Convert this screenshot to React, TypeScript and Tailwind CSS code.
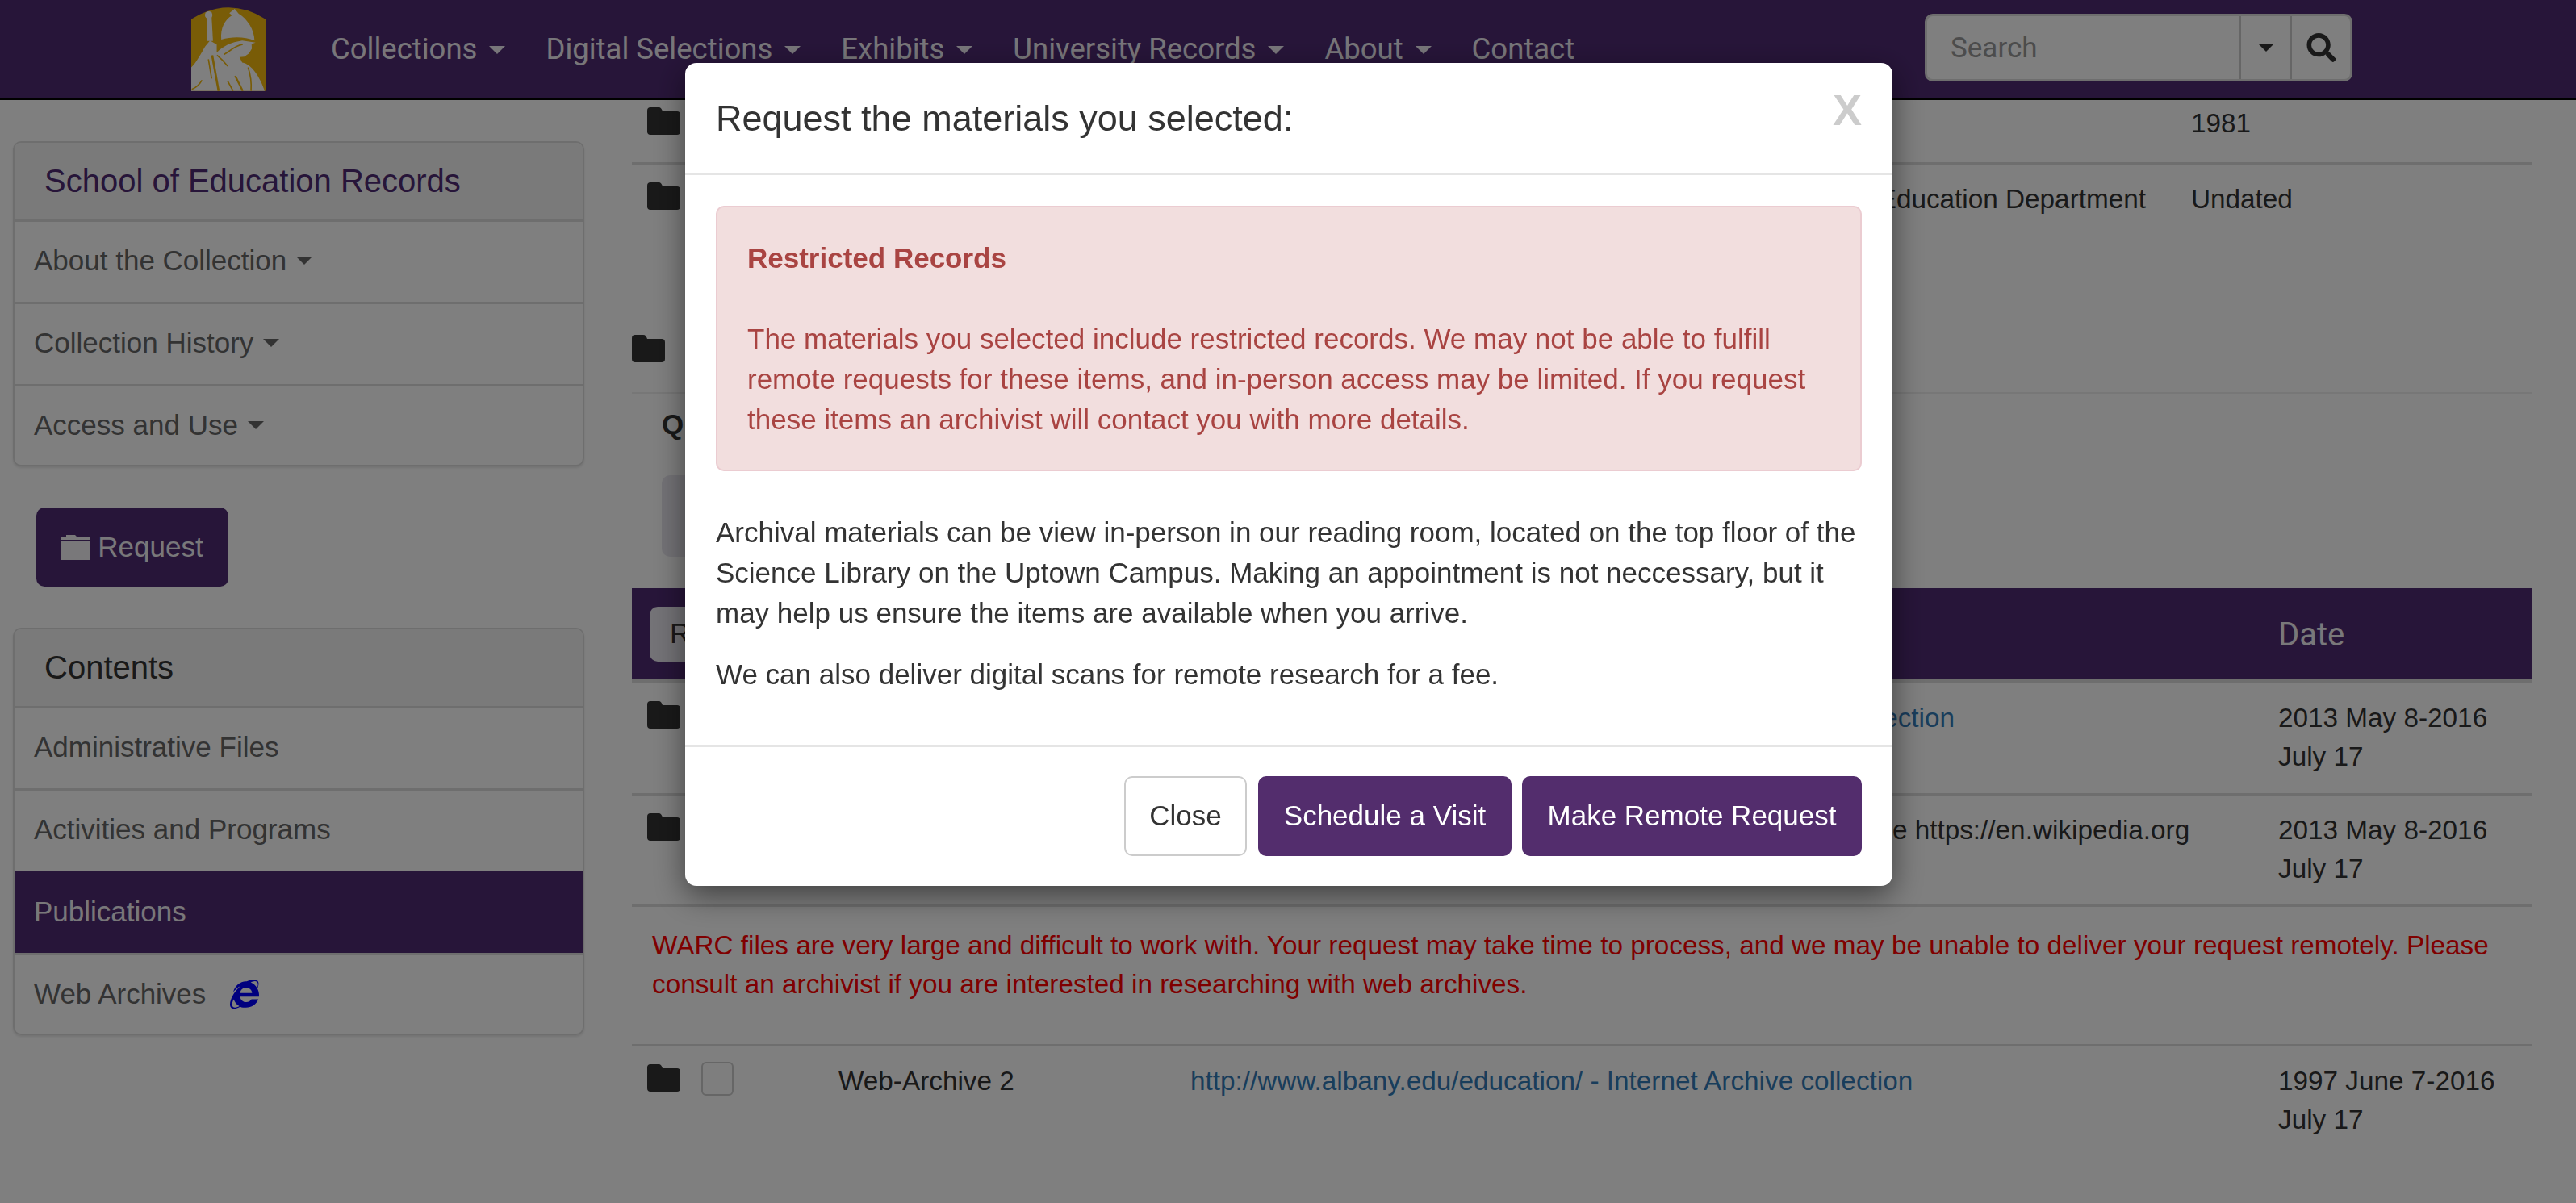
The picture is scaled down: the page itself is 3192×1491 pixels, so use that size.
import React from 'react';
import { FaInternetExplorer, FaSearch } from 'react-icons/fa';

const navItems = ['Collections', 'Digital Selections', 'Exhibits', 'University Records', 'About'];

const Caret = () => (
  <span className="inline-block w-0 h-0 border-t-[10px] border-x-[10px] border-x-transparent border-t-current" />
);

const Folder = () => (
  <svg viewBox="0 0 41 34" className="w-[41px] h-[34px] shrink-0" fill="#333333">
    <path d="M4 0h10c3 0 4 2 5 5h18c2.500 0 4 1.500 4 4v21c0 2.500-1.500 4-4 4H4c-2.500 0-4-1.500-4-4V4c0-2.500 1.500-4 4-4z" />
  </svg>
);

// логотип университета, фигура рисуется по координатам кропа
const Logo = () => (
  <svg viewBox="110 27 277 311" className="w-[92px] h-[104px] shrink-0">
    <path d="M110 338V70Q250-16 387 70V338Z" fill="#f2b90f" />
    <g fill="#ffffff">
      <circle cx="175" cy="55" r="14" />
      <path d="M168 62h18l5 90h-22z" />
      <path d="M222 146C218 105 235 72 262 56L252 48 272 32 287 50C320 70 345 110 346 150 310 135 262 135 222 146Z" />
      <path d="M205 195C225 172 260 156 300 150L350 158 335 163 336 180 325 198 308 210 290 212 300 232C335 238 366 285 384 338H110V250C130 232 148 195 162 172L180 150 205 165Z" />
    </g>
    <g fill="none" stroke="#f2b90f" strokeWidth="5">
      <path d="M232 202C255 190 270 170 302 164" />
      <path d="M206 205C222 218 232 228 246 246" />
      <path d="M188 205L212 338" strokeWidth="8" />
      <path d="M174 220L186 292" />
      <path d="M112 332C130 325 142 312 150 298" />
      <path d="M245 300L266 338" />
      <path d="M274 282C285 305 294 322 302 338" strokeWidth="7" />
      <path d="M322 250C332 280 335 310 333 338" />
    </g>
  </svg>
);

const Panel = ({ title, titleClass, children }: { title: string; titleClass: string; children: React.ReactNode }) => (
  <div className="border-2 border-[#dddddd] rounded-[10px] shadow-[0_2px_3px_rgba(0,0,0,0.1)] overflow-hidden">
    <div className={`h-[95px] flex items-center pl-[37px] pb-[2px] text-[40px] bg-[#f5f5f5] ${titleClass}`}>{title}</div>
    {children}
  </div>
);

const SideRow = ({ label, active, caret, children }: { label: string; active?: boolean; caret?: boolean; children?: React.ReactNode }) => (
  <div className={`h-[102px] last:h-[100px] pb-[3px] last:pb-[1px] border-t-[3px] flex items-center gap-3 pl-[24px] text-[35px] ${active ? 'bg-[#4f2b73] border-[#4f2b73] text-[#f2f0f5]' : 'border-[#dddddd] text-[#666666]'}`}>
    {label}
    {caret && <Caret />}
    {children}
  </div>
);

const TableRow = ({ name, desc, link, line1, line2, h, last }: { name: string; desc: string; link?: boolean; line1: string; line2: string; h: string; last?: boolean }) => (
  <div className={`flex pl-[19px] border-[#dddddd] ${last ? '' : 'border-b-[3px]'} ${h}`}>
    <div className="mt-[22px]"><Folder /></div>
    <div className="ml-[26px] mt-[19px] w-[40px] h-[42px] border-2 border-[#cccccc] rounded-[6px] bg-[#fdfdfd] shrink-0" />
    <div className="ml-[130px] w-[436px] shrink-0 mt-[18px] leading-[50px]">{name}</div>
    <div className={`mt-[18px] leading-[50px] whitespace-nowrap ${link ? 'text-[#337ab7]' : ''}`}>{desc}</div>
    <div className="ml-auto w-[314px] shrink-0 mt-[19px] leading-[48px]">{line1}<br />{line2}</div>
  </div>
);

export default function App() {
  return (
    <div className="relative w-[3192px] h-[1491px] overflow-hidden bg-white text-[35px] text-[#333333] font-['Liberation_Sans',Arial,sans-serif]">
      <header className="h-[124px] bg-[#4f2b73] border-b-[3px] border-black flex items-center pl-[237px] pr-[277px] font-['Roboto',sans-serif]">
        <Logo />
        <nav className="flex items-center gap-[50px] ml-[81px] mt-[2px] text-[36.5px] text-[#f0edf4]">
          {navItems.map((item) => (
            <span key={item} className="flex items-center gap-[15px]">
              {item}
              <Caret />
            </span>
          ))}
          <span>Contact</span>
        </nav>
        <div className="ml-auto -mt-[3px] h-[84px] w-[530px] flex bg-white border-[3px] border-[#dddddd] rounded-[10px] overflow-hidden">
          <input
            placeholder="Search"
            className="w-[386px] pl-[29px] pt-[2px] text-[35px] outline-none placeholder:text-[#999999]"
          />
          <div className="w-[64px] flex items-center justify-center border-l-[3px] border-[#cccccc] text-[#333333]">
            <Caret />
          </div>
          <div className="flex-1 flex items-center justify-center border-l-[2px] border-[#cccccc] text-[#333333]">
            <FaSearch className="w-[37px] h-[36px]" />
          </div>
        </div>
      </header>

      <div className="flex pl-[16px]">
        <aside className="w-[708px] shrink-0 pt-[51px]">
          <Panel title="School of Education Records" titleClass="text-[#4f2b73]">
            <SideRow label="About the Collection" caret />
            <SideRow label="Collection History" caret />
            <SideRow label="Access and Use" caret />
          </Panel>
          <div className="ml-[29px] mt-[51px] w-[238px] h-[98px] rounded-[10px] bg-[#4f2b73] text-[#f2f0f5] flex items-center justify-center gap-[10px]">
            <svg viewBox="0 0 35 31" className="w-[35px] h-[31px]" fill="currentColor">
              <path d="M6 0h11l3 3h15v3H0V3h6zM0 8h35v23H0z" />
            </svg>
            Request
          </div>
          <div className="mt-[51px]">
            <Panel title="Contents" titleClass="text-[#333333]">
              <SideRow label="Administrative Files" />
              <SideRow label="Activities and Programs" />
              <SideRow label="Publications" active />
              <SideRow label="Web Archives">
                <FaInternetExplorer className="ml-[18px] w-[36px] h-[36px] text-[#0000ff]" />
              </SideRow>
            </Panel>
          </div>
        </aside>

        <main className="ml-[59px] w-[2354px] shrink-0 text-[33.3px]">
          <div className="flex h-[80px] pl-[19px] border-b-[3px] border-[#dddddd]">
            <div className="mt-[9px]"><Folder /></div>
            <div className="ml-auto w-[422px] mt-[4px] leading-[50px]">1981</div>
          </div>
          <div className="flex h-[130px] pl-[19px]">
            <div className="mt-[22px]"><Folder /></div>
            <div className="ml-auto mt-[18px] leading-[50px]">School of Education Department</div>
            <div className="ml-[56px] w-[422px] mt-[18px] leading-[50px]">Undated</div>
          </div>
          <div className="h-[154px] pt-[81px] border-b-2 border-[#eeeeee]">
            <Folder />
          </div>
          <div className="h-[241px] pl-[37px] pt-[13px]">
            <div className="font-bold text-[35px] leading-[50px]">Quick Access</div>
            <div className="mt-[38px] w-[400px] h-[101px] rounded-[10px] bg-[#e8e6ee]" />
          </div>

          <div className="h-[118px] border-b-[5px] border-[#dddddd] bg-[#4f2b73] flex items-center pl-[22px] text-[#f2f0f5] font-['Roboto',sans-serif]">
            <div className="w-[300px] h-[68px] rounded-[10px] bg-[#e8e6ee] text-[#333333] text-[35px] flex items-center pl-[25px] font-['Liberation_Sans',sans-serif]">Request</div>
            <div className="ml-auto w-[314px] text-[40px] mt-[3px]">Date</div>
          </div>
          <TableRow h="h-[139px]" name="Web-Archive 1" desc="http://www.albany.edu/education/ew/ - Internet Archive collection" link line1="2013 May 8-2016" line2="July 17" />
          <TableRow h="h-[138px]" name="Web-Archive 1" desc="Schools of Education at University at Albany Wikipedia page https://en.wikipedia.org" line1="2013 May 8-2016" line2="July 17" />
          <div className="h-[173px] border-b-[3px] border-[#dddddd] pl-[25px] pr-[45px] pt-[24px] leading-[48px] text-[#ff0000]">
            WARC files are very large and difficult to work with. Your request may take time to process, and we may be unable to deliver your request remotely. Please consult an archivist if you are interested in researching with web archives.
          </div>
          <TableRow last h="h-[139px]" name="Web-Archive 2" desc="http://www.albany.edu/education/ - Internet Archive collection" link line1="1997 June 7-2016" line2="July 17" />
        </main>
      </div>

      {/* затемнение и модалка поверх страницы */}
      <div className="fixed inset-0 bg-black/50 flex justify-center">
        <div className="mt-[78px] ml-[2px] w-[1496px] h-[1020px] bg-white rounded-[14px] shadow-[0_12px_38px_rgba(0,0,0,0.5)] flex flex-col">
          <div className="h-[139px] border-b-[3px] border-[#e5e5e5] flex items-center justify-between pl-[38px] pr-[38px]">
            <h4 className="text-[45px] mt-[2px]">Request the materials you selected:</h4>
            <span className="text-[54px] font-bold text-[#cccccc] -mt-[20px]">X</span>
          </div>
          <div className="px-[38px] pt-[38px]">
            <div className="h-[329px] bg-[#f2dede] border-2 border-[#ebccd1] rounded-[10px] px-[37px] pt-[38px] text-[#a94442] leading-[50px]">
              <div className="font-bold">Restricted Records</div>
              <div className="mt-[50px]">
                The materials you selected include restricted records. We may not be able to fulfill remote requests for these items, and in-person access may be limited. If you request these items an archivist will contact you with more details.
              </div>
            </div>
            <p className="mt-[51px] leading-[50px]">
              Archival materials can be view in-person in our reading room, located on the top floor of the Science Library on the Uptown Campus. Making an appointment is not neccessary, but it may help us ensure the items are available when you arrive.
            </p>
            <p className="mt-[26px] leading-[50px]">We can also deliver digital scans for remote research for a fee.</p>
          </div>
          <div className="mt-auto h-[175px] border-t-[3px] border-[#e5e5e5] flex justify-end gap-[14px] pt-[36px] pr-[38px]">
            <button className="w-[152px] h-[99px] border-2 border-[#cccccc] rounded-[10px] text-[#333333]">Close</button>
            <button className="w-[314px] h-[99px] rounded-[10px] bg-[#532d6d] text-white">Schedule a Visit</button>
            <button className="-ml-[1px] w-[421px] h-[99px] rounded-[10px] bg-[#532d6d] text-white">Make Remote Request</button>
          </div>
        </div>
      </div>
    </div>
  );
}
